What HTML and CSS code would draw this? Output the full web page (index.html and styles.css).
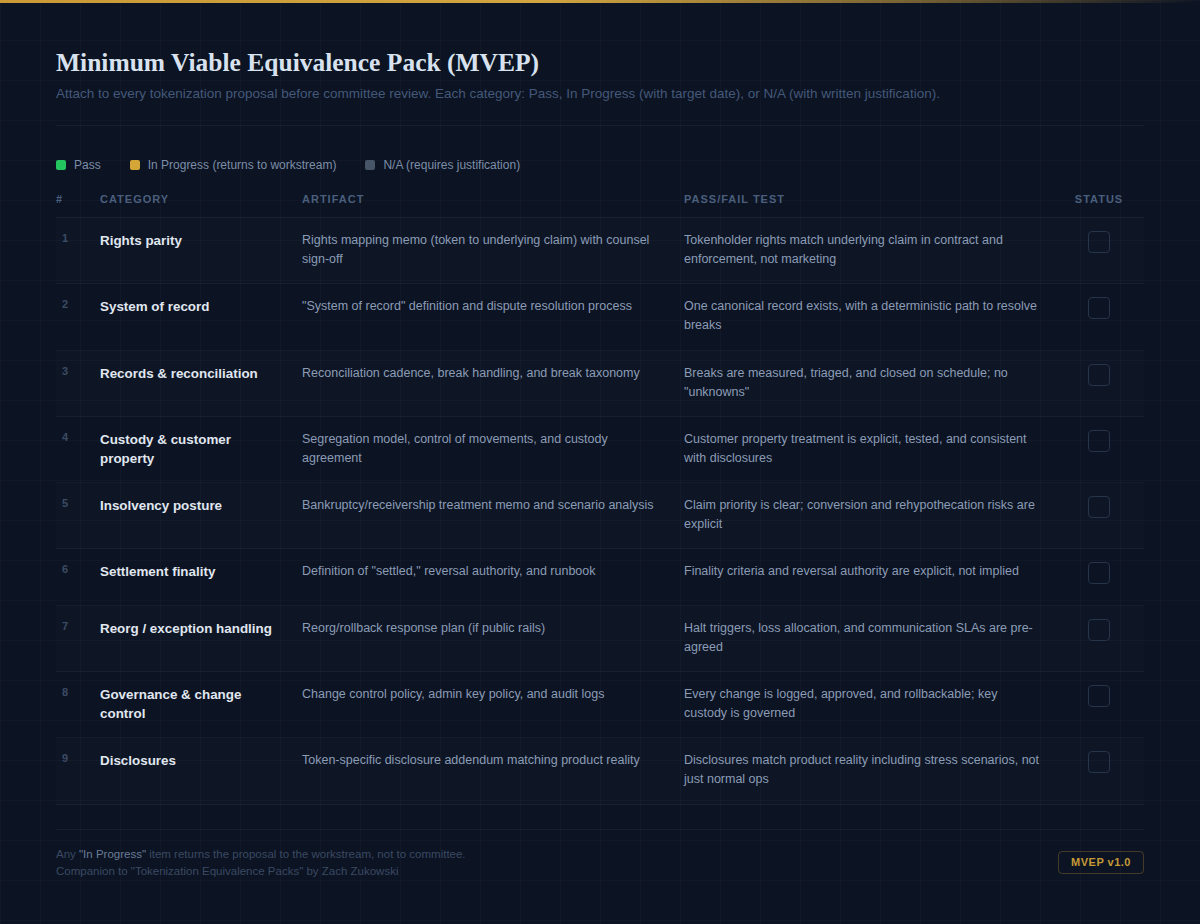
FILE: index.html
```html
<!DOCTYPE html>
<html lang="en">
<head>
<meta charset="utf-8">
<title>Minimum Viable Equivalence Pack (MVEP)</title>
<link rel="stylesheet" href="styles.css">
</head>
<body>
<div class="topbar"></div>
<main class="page">
  <header class="head">
    <h1 class="title">Minimum Viable Equivalence Pack (MVEP)</h1>
    <p class="subtitle">Attach to every tokenization proposal before committee review. Each category: Pass, In Progress (with target date), or N/A (with written justification).</p>
  </header>

  <ul class="legend">
    <li class="legend-item"><span class="swatch swatch-pass"></span>Pass</li>
    <li class="legend-item"><span class="swatch swatch-progress"></span>In Progress (returns to workstream)</li>
    <li class="legend-item"><span class="swatch swatch-na"></span>N/A (requires justification)</li>
  </ul>

  <section class="table">
    <div class="row row-head">
      <div class="cell c-num">#</div>
      <div class="cell c-cat">Category</div>
      <div class="cell c-art">Artifact</div>
      <div class="cell c-test">Pass/Fail Test</div>
      <div class="cell c-status">Status</div>
    </div>

    <div class="row">
      <div class="cell c-num">1</div>
      <div class="cell c-cat">Rights parity</div>
      <div class="cell c-art">Rights mapping memo (token to underlying claim) with counsel sign-off</div>
      <div class="cell c-test">Tokenholder rights match underlying claim in contract and enforcement, not marketing</div>
      <div class="cell c-status"><span class="check"></span></div>
    </div>
    <div class="row">
      <div class="cell c-num">2</div>
      <div class="cell c-cat">System of record</div>
      <div class="cell c-art">"System of record" definition and dispute resolution process</div>
      <div class="cell c-test">One canonical record exists, with a deterministic path to resolve breaks</div>
      <div class="cell c-status"><span class="check"></span></div>
    </div>
    <div class="row">
      <div class="cell c-num">3</div>
      <div class="cell c-cat">Records &amp; reconciliation</div>
      <div class="cell c-art">Reconciliation cadence, break handling, and break taxonomy</div>
      <div class="cell c-test">Breaks are measured, triaged, and closed on schedule; no "unknowns"</div>
      <div class="cell c-status"><span class="check"></span></div>
    </div>
    <div class="row">
      <div class="cell c-num">4</div>
      <div class="cell c-cat">Custody &amp; customer property</div>
      <div class="cell c-art">Segregation model, control of movements, and custody agreement</div>
      <div class="cell c-test">Customer property treatment is explicit, tested, and consistent with disclosures</div>
      <div class="cell c-status"><span class="check"></span></div>
    </div>
    <div class="row">
      <div class="cell c-num">5</div>
      <div class="cell c-cat">Insolvency posture</div>
      <div class="cell c-art">Bankruptcy/receivership treatment memo and scenario analysis</div>
      <div class="cell c-test">Claim priority is clear; conversion and rehypothecation risks are explicit</div>
      <div class="cell c-status"><span class="check"></span></div>
    </div>
    <div class="row">
      <div class="cell c-num">6</div>
      <div class="cell c-cat">Settlement finality</div>
      <div class="cell c-art">Definition of "settled," reversal authority, and runbook</div>
      <div class="cell c-test">Finality criteria and reversal authority are explicit, not implied</div>
      <div class="cell c-status"><span class="check"></span></div>
    </div>
    <div class="row">
      <div class="cell c-num">7</div>
      <div class="cell c-cat">Reorg / exception handling</div>
      <div class="cell c-art">Reorg/rollback response plan (if public rails)</div>
      <div class="cell c-test">Halt triggers, loss allocation, and communication SLAs are pre-agreed</div>
      <div class="cell c-status"><span class="check"></span></div>
    </div>
    <div class="row">
      <div class="cell c-num">8</div>
      <div class="cell c-cat">Governance &amp; change control</div>
      <div class="cell c-art">Change control policy, admin key policy, and audit logs</div>
      <div class="cell c-test">Every change is logged, approved, and rollbackable; key custody is governed</div>
      <div class="cell c-status"><span class="check"></span></div>
    </div>
    <div class="row">
      <div class="cell c-num">9</div>
      <div class="cell c-cat">Disclosures</div>
      <div class="cell c-art">Token-specific disclosure addendum matching product reality</div>
      <div class="cell c-test">Disclosures match product reality including stress scenarios, not just normal ops</div>
      <div class="cell c-status"><span class="check"></span></div>
    </div>
  </section>

  <footer class="foot">
    <div class="foot-notes">
      <p class="foot-line">Any <span class="foot-em">"In Progress"</span> item returns the proposal to the workstream, not to committee.</p>
      <p class="foot-line">Companion to "Tokenization Equivalence Packs" by Zach Zukowski</p>
    </div>
    <span class="badge">MVEP v1.0</span>
  </footer>
</main>
</body>
</html>
```

FILE: styles.css
```css
* { box-sizing: border-box; }

html, body {
  margin: 0;
  padding: 0;
}

body {
  min-height: 924px;
  background-color: #0c1322;
  background-image:
    linear-gradient(to right, rgba(148, 163, 184, 0.035) 1px, transparent 1px),
    linear-gradient(to bottom, rgba(148, 163, 184, 0.035) 1px, transparent 1px);
  background-size: 40px 40px;
  font-family: "Liberation Sans", Arial, sans-serif;
  color: #8797b0;
}

.topbar {
  height: 3px;
  background: linear-gradient(90deg, #c99a36 0%, #d2a540 45%, rgba(210, 165, 64, 0.55) 75%, rgba(210, 165, 64, 0) 100%);
}

.page {
  width: 1088px;
  margin: 0 auto;
  padding-top: 44px;
}

.head {
  padding-bottom: 22px;
  border-bottom: 1px solid rgba(148, 163, 184, 0.09);
}

.title {
  margin: 0;
  font-family: "Liberation Serif", "Times New Roman", serif;
  font-weight: 700;
  font-size: 25.5px;
  line-height: 32px;
  color: #d8e2ef;
}

.subtitle {
  margin: 5px 0 0;
  font-size: 13.5px;
  line-height: 19px;
  color: #44597a;
}

.legend {
  list-style: none;
  margin: 31px 0 0;
  padding: 0;
  display: flex;
  gap: 29px;
  font-size: 12px;
  line-height: 16px;
  color: #7c8ea8;
}

.legend-item {
  display: flex;
  align-items: center;
  gap: 8px;
}

.swatch {
  width: 10px;
  height: 10px;
  border-radius: 2px;
}

.swatch-pass { background: #22c55e; }
.swatch-progress { background: #d4a537; }
.swatch-na { background: #475569; }

.table {
  margin-top: 19px;
}

.row {
  display: grid;
  grid-template-columns: 44px 202px 382px 370px 90px;
  border-bottom: 1px solid rgba(148, 163, 184, 0.07);
  font-size: 12.5px;
  line-height: 19px;
}

.row:nth-child(even) {
  background: rgba(148, 163, 184, 0.022);
}

.cell {
  padding: 13px 24px 14.3px 0;
}

.c-num {
  padding-left: 6px;
  padding-right: 0;
  font-size: 11px;
  line-height: 15px;
  font-weight: 700;
  color: #3b4b64;
}

.c-cat {
  font-size: 13.4px;
  font-weight: 700;
  color: #e0e7f0;
}

.c-art {
  color: #8b9cb6;
}

.c-test {
  padding-right: 12px;
  color: #8b9cb6;
}

.c-status {
  padding-right: 0;
  text-align: center;
}

.row-head {
  border-bottom-color: rgba(148, 163, 184, 0.1);
}

.row-head .cell {
  padding: 0 0 11px;
  font-size: 11px;
  line-height: 14px;
  font-weight: 700;
  letter-spacing: 1px;
  text-transform: uppercase;
  color: #4a5f7d;
}

.row-head .c-status {
  text-align: center;
}

.check {
  display: inline-block;
  width: 22px;
  height: 22px;
  border: 1px solid #26344a;
  border-radius: 4px;
}

.foot {
  margin-top: 24px;
  padding-top: 16px;
  border-top: 1px solid rgba(148, 163, 184, 0.09);
  display: flex;
  justify-content: space-between;
  align-items: center;
}

.foot-line {
  margin: 0;
  font-size: 11.5px;
  line-height: 17px;
  color: #3a4a63;
}

.foot-em {
  color: #6a7c98;
}

.badge {
  display: inline-block;
  padding: 4px 12px;
  border: 1px solid rgba(212, 165, 55, 0.28);
  border-radius: 4px;
  font-size: 11px;
  line-height: 13px;
  font-weight: 700;
  letter-spacing: 0.5px;
  color: #c49a38;
}
```
